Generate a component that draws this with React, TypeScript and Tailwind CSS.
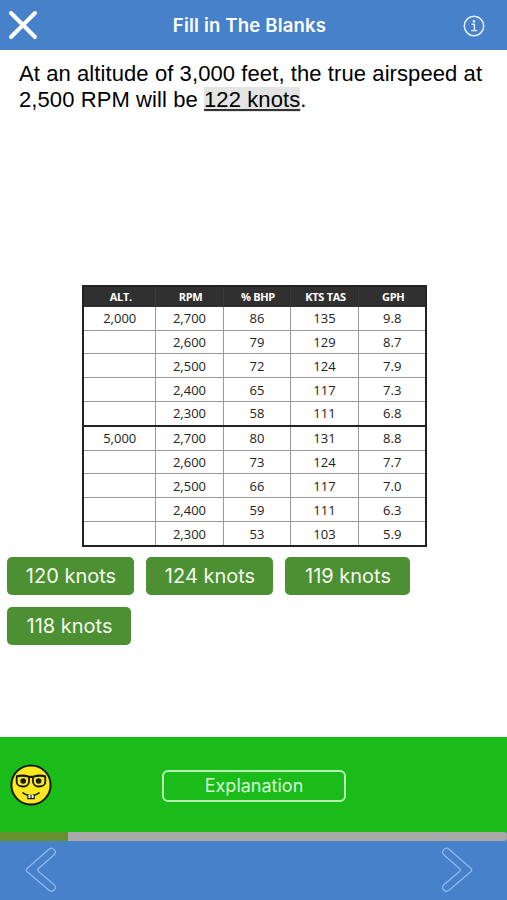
import React from 'react'

const columns = ["ALT.", "RPM", "% BHP", "KTS TAS", "GPH"]

const rows = [
    ["2,000", "2,700", "86", "135", "9.8"],
    ["", "2,600", "79", "129", "8.7"],
    ["", "2,500", "72", "124", "7.9"],
    ["", "2,400", "65", "117", "7.3"],
    ["", "2,300", "58", "111", "6.8"],
    ["5,000", "2,700", "80", "131", "8.8"],
    ["", "2,600", "73", "124", "7.7"],
    ["", "2,500", "66", "117", "7.0"],
    ["", "2,400", "59", "111", "6.3"],
    ["", "2,300", "53", "103", "5.9"]
]

const answers = [
    { text: "120 knots", width: "w-[127px]" },
    { text: "124 knots", width: "w-[127px]" },
    { text: "119 knots", width: "w-[125px]" },
    { text: "118 knots", width: "w-[124px]" }
]

function Header() {
    return (
        <header className="h-[50px] shrink-0 bg-[#4681ca] flex items-center justify-between pl-2 pr-[22px] text-white">
            <button aria-label="Close">
                <svg width="30" height="30" viewBox="0 0 30 30" fill="none" stroke="currentColor" strokeWidth="4" strokeLinecap="round">
                    <path d="M3 3 27 27M27 3 3 27" />
                </svg>
            </button>
            <h1 className="text-[18.5px] font-semibold tracking-[0.2px] pt-[2px] pr-[2px] font-['Inter',sans-serif]">Fill in The Blanks</h1>
            <button aria-label="Info" className="pt-[2px]">
                <svg width="22" height="22" viewBox="0 0 22 22" fill="none" stroke="#e4efff" strokeWidth="1.5">
                    <circle cx="11" cy="11" r="9.7" />
                    <path d="M8.6 9.3h2.8v6.2M8.2 15.6h6" strokeWidth="1.4" />
                    <circle cx="11" cy="6.2" r="1.3" fill="#e4efff" stroke="none" />
                </svg>
            </button>
        </header>
    )
}

function PerformanceTable() {
    return (
        <table className="w-[343px] h-[262px] ml-[82px] table-fixed border-collapse border-2 border-[#222] text-center text-[#222] font-['Open_Sans','Noto_Sans',sans-serif]">
            <colgroup>
                <col className="w-[72px]" />
                <col className="w-[68px]" />
                <col className="w-[67px]" />
                <col className="w-[68px]" />
                <col className="w-[68px]" />
            </colgroup>
            <thead>
                <tr className="h-[21px] bg-[#303030] text-white">
                    {columns.map((column) => (
                        <th key={column} className="p-0 pl-[3px] text-[11px] leading-[18px] font-bold tracking-[-0.3px] border-x border-[#3a3a3a]">{column}</th>
                    ))}
                </tr>
            </thead>
            <tbody>
                {rows.map((row, index) => (
                    <tr key={index} className={index === 5 ? "border-t-2 border-[#222]" : ""}>
                        {row.map((value, i) => (
                            <td key={i} className={`p-0 pl-px text-[13px] leading-[18px] font-medium border-r border-r-[#999] last:border-r-2 last:border-r-[#222] ${index === 4 || index === 9 ? "" : "border-b border-b-[#999]"}`}>{value}</td>
                        ))}
                    </tr>
                ))}
            </tbody>
        </table>
    )
}

function NerdFace() {
    return (
        <svg width="42" height="42" viewBox="0 0 42 42" fill="none" stroke="#17180a">
            <circle cx="21" cy="21" r="19.6" fill="#fae91e" strokeWidth="2" />
            <path d="M6 12.5c3-.8 9-1 12.2 0 1.8.5 3.8.5 5.6 0 3.2-1 9.2-.8 12.2 0" strokeWidth="2.2" />
            <path d="M6.7 13v5c0 6 11.8 6 12.3 0v-5M23 13v5c.5 6 12.3 6 12.3 0v-5" strokeWidth="1.8" />
            <circle cx="13.2" cy="17" r="2.8" fill="#17180a" stroke="none" />
            <circle cx="28.6" cy="17" r="2.8" fill="#17180a" stroke="none" />
            <path d="M12.5 28.5c5 4.3 12 4.3 17 0" strokeWidth="1.6" />
            <path d="M17.8 31v3.6h6.4v-3.6M21 31v3.6" fill="#fff" strokeWidth="1.2" />
        </svg>
    )
}

function Chevron({ flipped = false }: { flipped?: boolean }) {
    return (
        <svg className={flipped ? "-scale-x-100" : ""} width="32" height="46" viewBox="0 0 32 46" fill="none" stroke="#8fbcf0" strokeWidth="1.2" strokeLinejoin="round">
            <path d="M24 2.2 2 21.5Q.5 23 2 24.5L24 43.3C27.5 46 32.5 41.5 29.2 37.8L13.5 24.5Q12 23 13.5 21.5L29.2 7.8C32.5 4 27.5-.5 24 2.2Z" />
        </svg>
    )
}

function App() {
    return (
        <div className="w-full h-[900px] flex flex-col bg-white overflow-hidden">
            <Header />
            <main className="flex-1 flex flex-col">
                <p className="h-[235px] pt-[11px] pl-[19px] text-[22px] leading-[26px] tracking-[0.09px] whitespace-nowrap text-black font-['Liberation_Sans',sans-serif]">
                    At an altitude of 3,000 feet, the true airspeed at<br />
                    2,500 RPM will be <span className="bg-[#e4e4e4] underline decoration-2 decoration-[#333] underline-offset-[2px] [text-decoration-skip-ink:none]">122 knots</span>.
                </p>
                <PerformanceTable />
                <div className="flex flex-wrap gap-x-3 gap-y-3 pl-[7px] pt-[10px] font-['Inter',sans-serif]">
                    {answers.map((answer) => (
                        <button key={answer.text} className={`${answer.width} h-[38px] pl-px rounded-[5px] bg-[#4d9033] text-[#f4faf0] text-[20px]`}>
                            {answer.text}
                        </button>
                    ))}
                </div>
            </main>
            <section className="h-[95px] shrink-0 bg-[#1abc1a] grid grid-cols-[1fr_184px_1fr] items-center pl-[10px] pr-[9px]">
                <NerdFace />
                <button className="h-8 mt-[2px] rounded-md border-2 border-[#b8f0b4] text-[#d8f8d5] text-[18px] leading-[28px] font-['Inter',sans-serif]">Explanation</button>
            </section>
            <div className="h-[9px] shrink-0 bg-[#4681ca]">
                <div className="h-full bg-[#a9a9a9] rounded-r-[3px]">
                    <div className="h-full w-[68px] bg-[#65922f]" />
                </div>
            </div>
            <footer className="h-[59px] shrink-0 bg-[#4681ca] flex items-center justify-between pl-[25px] pr-[34px] pb-[2px]">
                <button aria-label="Previous"><Chevron /></button>
                <button aria-label="Next"><Chevron flipped /></button>
            </footer>
        </div>
    )
}

export default App
